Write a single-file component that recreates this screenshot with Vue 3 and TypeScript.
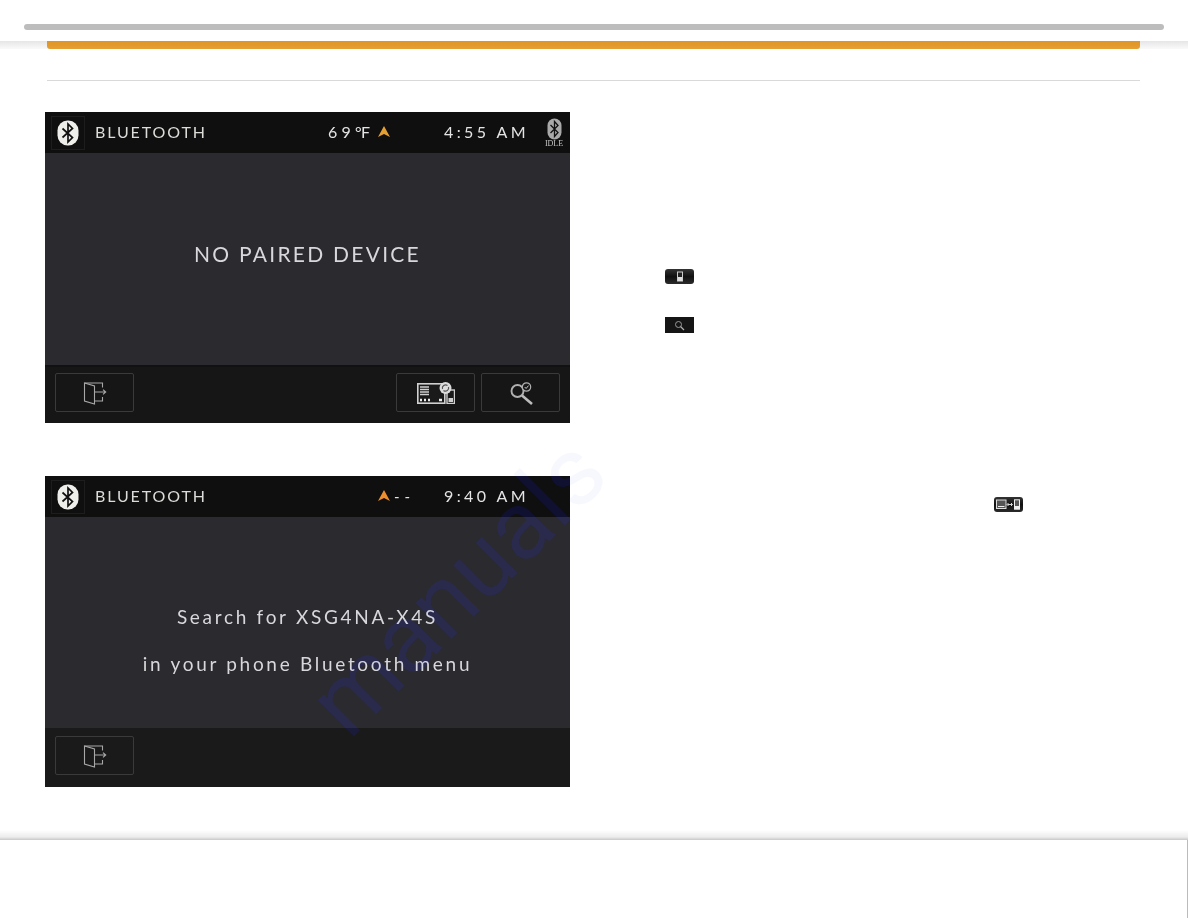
<template>
  <div class="page">
    <div class="topbar"><div class="greybar"></div></div>
    <div class="band"><div class="orange"></div></div>
    <div class="rule"></div>

    <div class="content">
      <div class="screens">
        <div v-for="s in screens" :key="s.title + s.time" class="screen" :class="s.variant">
          <div class="head">
            <div class="logo">
              <svg width="22" height="26" viewBox="0 0 22 26">
                <rect x="0.5" y="0.5" width="21" height="25" rx="10" fill="#eeeeea" />
                <path d="M5.5 8.5 L15.5 17.5 L11 22 L11 4 L15.5 8.5 L5.5 17.5" fill="none" stroke="#111" stroke-width="1.7" />
              </svg>
            </div>
            <div class="title">BLUETOOTH</div>
            <div class="weather">
              <template v-if="s.temp">
                <span class="temp">{{ s.temp }}</span>
                <span class="deg">°F</span>
                <svg class="arrow" width="12" height="11" viewBox="0 0 12 11"><path d="M6 0 L12 11 L6 8 L0 11 Z" fill="#e5a033" /></svg>
              </template>
              <template v-else>
                <svg class="arrow" width="12" height="11" viewBox="0 0 12 11"><path d="M6 0 L12 11 L6 8 L0 11 Z" fill="#ee8e2c" /></svg>
                <span class="dash">- -</span>
              </template>
            </div>
            <div class="time">{{ s.time }}</div>
            <div class="idle">
              <template v-if="s.idle">
                <svg width="15" height="22" viewBox="0 0 15 22">
                  <rect x="0.5" y="0.5" width="14" height="21" rx="7" fill="#a9a9a9" />
                  <path d="M3.5 7 L11 14.5 L7.5 18.5 L7.5 3.5 L11 7.5 L3.5 15" fill="none" stroke="#111" stroke-width="1.3" />
                </svg>
                <span>IDLE</span>
              </template>
            </div>
          </div>

          <div class="body">
            <div v-for="line in s.lines" :key="line" class="msg">{{ line }}</div>
          </div>

          <div class="foot">
            <button class="btn">
              <svg width="24" height="24" viewBox="0 0 24 24" fill="none" stroke="#a8a8a8" stroke-width="1.1">
                <path d="M1.5 2 L19.5 2 L19.5 6.5 M19.5 16 L19.5 20 L11.5 20" />
                <path d="M1.5 2 L11.5 5 L11.5 23 L1.5 20 Z" />
                <path d="M11.5 11 L22.5 11 M20 8.7 L22.7 11 L20 13.3" />
              </svg>
            </button>
            <template v-if="s.variant === 'paired'">
              <button class="btn push">
                <svg width="38" height="22" viewBox="0 0 38 22">
                  <rect x="0.8" y="1.8" width="27" height="19.4" fill="#1a1a1a" stroke="#d0d0d0" stroke-width="1.6" />
                  <path d="M3 5 H12 M3 7.5 H12 M3 10 H12 M3 12.5 H12" stroke="#d0d0d0" stroke-width="1.4" />
                  <path d="M3 18 H5 M7 18 H9 M11 18 H13 M22 18 H25" stroke="#eee" stroke-width="2.4" />
                  <rect x="30" y="8" width="7.5" height="13.5" fill="#1a1a1a" stroke="#d0d0d0" stroke-width="1.4" />
                  <path d="M31.5 16 H36 V20 H31.5 Z" fill="#d0d0d0" />
                  <circle cx="28.5" cy="6" r="6" fill="#dcdcdc" />
                  <path d="M25.5 7 A3.2 3.2 0 0 1 30.5 3.5 M31.5 5 A3.2 3.2 0 0 1 26.5 8.5" fill="none" stroke="#555" stroke-width="1.2" />
                </svg>
              </button>
              <button class="btn">
                <svg width="24" height="24" viewBox="0 0 24 24" fill="none">
                  <circle cx="8.5" cy="10" r="6" stroke="#b0b0b0" stroke-width="1.9" />
                  <path d="M13 14.5 L23 23" stroke="#bcbcbc" stroke-width="2.6" />
                  <circle cx="17.5" cy="6" r="4.2" fill="#1a1a1a" stroke="#b0b0b0" stroke-width="1.2" />
                  <path d="M15.7 6 L17.1 7.5 L19.5 4.6" stroke="#c8c8c8" stroke-width="1" />
                </svg>
              </button>
            </template>
          </div>
        </div>
      </div>

      <div class="side">
        <div class="chip rounded chip-phone">
          <svg width="8" height="11" viewBox="0 0 8 11" fill="none">
            <rect x="1.5" y="1" width="5" height="9" fill="#222" stroke="#ccc" />
            <path d="M2 6 H6 V10 H2 Z" fill="#ddd" />
          </svg>
        </div>
        <div class="chip chip-search">
          <svg width="11" height="11" viewBox="0 0 11 11" fill="none">
            <circle cx="4.5" cy="4.5" r="3" stroke="#9a9a9a" />
            <path d="M6.5 6.5 L10 10" stroke="#b0b0b0" stroke-width="1.2" />
          </svg>
        </div>
        <div class="chip rounded chip-link">
          <svg width="25" height="11" viewBox="0 0 25 11" fill="none">
            <rect x="0.5" y="1" width="9.5" height="8.5" fill="#555" stroke="#ddd" />
            <path d="M2 7.5 H8.5" stroke="#eee" />
            <path d="M11.5 5.5 H16 M12.5 4 L11 5.5 L12.5 7 M15 4 L16.5 5.5 L15 7" stroke="#eee" stroke-width="0.9" />
            <rect x="18.5" y="0.8" width="5" height="9.4" fill="#555" stroke="#eee" />
            <path d="M19 7 H23 V10 H19 Z" fill="#eee" />
          </svg>
        </div>
      </div>
    </div>

    <div class="bottom">
      <div class="shade"></div>
      <div class="sheet"></div>
    </div>

    <!-- two layers: faint tint over the white page, stronger glow over the dark screens -->
    <div class="watermark tint">manuals</div>
    <div class="watermark glow" aria-hidden="true">manuals</div>
  </div>
</template>

<script setup lang="ts">
interface Screen {
  title: string;
  variant: 'paired' | 'search';
  temp: string;
  time: string;
  idle: boolean;
  lines: string[];
}

const screens: Screen[] = [
  { title: 'BLUETOOTH', variant: 'paired', temp: '69', time: '4:55 AM', idle: true, lines: ['NO PAIRED DEVICE'] },
  {
    title: 'BLUETOOTH',
    variant: 'search',
    temp: '',
    time: '9:40 AM',
    idle: false,
    lines: ['Search for XSG4NA-X4S', 'in your phone Bluetooth menu'],
  },
];
</script>

<style>
html,
body {
  margin: 0;
  background: #fff;
}
</style>

<style scoped>
.page {
  position: relative;
  width: 1188px;
  height: 918px;
  display: flex;
  flex-direction: column;
  overflow: hidden;
  background: #fff;
  font-family: Lato, "Open Sans", sans-serif;
}

/* top of page */
.topbar {
  height: 41px;
  padding: 24px 24px 0;
  box-sizing: border-box;
}
.greybar {
  height: 6px;
  border-radius: 3px;
  background: #bdbdbd;
}
.band {
  height: 8px;
  background: linear-gradient(#e6e6e6, #fafafa);
  padding: 0 48px 0 47px;
}
.orange {
  height: 8px;
  background: linear-gradient(#e09426, #e59f33);
  border-radius: 0 0 3px 3px;
}
.rule {
  height: 1px;
  margin: 31px 48px 0 47px;
  background: #d9d9d9;
}

.content {
  display: flex;
  padding: 31px 0 0 45px;
}
.screens {
  width: 525px;
  display: flex;
  flex-direction: column;
  gap: 53px;
}

/* head unit screens */
.screen {
  height: 311px;
  display: flex;
  flex-direction: column;
  color: #e4e4e4;
}
.head {
  height: 41px;
  display: grid;
  grid-template-columns: 50px 233px 116px 91px 35px;
  align-items: center;
  background: #0f0f0f;
}
.logo {
  width: 34px;
  height: 34px;
  margin-left: 6px;
  box-sizing: border-box;
  border: 1px solid #1d1d1d;
  display: flex;
  align-items: center;
  justify-content: center;
}
.title {
  padding-bottom: 2px;
  font-size: 16px;
  letter-spacing: 1.9px;
  color: #dcdcd8;
}
.weather {
  display: flex;
  align-items: center;
  padding-bottom: 2px;
  font-size: 16px;
}
.temp {
  letter-spacing: 4.2px;
}
.deg {
  margin-left: 0;
  letter-spacing: -0.5px;
}
.weather .arrow {
  margin-left: 8px;
}
.search .weather {
  padding-left: 42px;
}
.dash {
  margin-left: 4px;
  font-size: 15px;
  letter-spacing: 0.6px;
  white-space: pre;
}
.time {
  padding-bottom: 2px;
  font-size: 16px;
  letter-spacing: 3.4px;
  white-space: nowrap;
}
.idle {
  display: flex;
  flex-direction: column;
  align-items: center;
  font-family: "Liberation Serif", serif;
  font-size: 8px;
  line-height: 8px;
  color: #c8c8c8;
  padding-left: 3px;
}
.body {
  flex: 1;
  display: flex;
  flex-direction: column;
  align-items: center;
  justify-content: center;
  background: #2a2a2f;
}
.paired .body {
  padding-bottom: 12px;
  box-sizing: border-box;
}
.search .body {
  padding-top: 35px;
  box-sizing: border-box;
}
.msg {
  line-height: 47px;
  font-size: 19px;
  letter-spacing: 2.7px;
  color: #d8d8dc;
}
.paired .msg {
  font-size: 21px;
  letter-spacing: 2.25px;
}
.foot {
  height: 58px;
  box-sizing: border-box;
  display: flex;
  gap: 6px;
  padding: 8px 10px 11px;
  background: #161616;
}
.paired .foot {
  border-top: 2px solid #111;
  padding-top: 6px;
}
.search .foot {
  height: 59px;
  background: #1a1a1a;
}
.btn {
  width: 79px;
  height: 39px;
  padding: 0;
  display: flex;
  align-items: center;
  justify-content: center;
  background: transparent;
  border: 1px solid #3a3a3a;
  border-radius: 2px;
}
.push {
  margin-left: auto;
}

/* small inline button pictures */
.side {
  flex: 1;
  display: flex;
  flex-direction: column;
}
.chip {
  width: 29px;
  height: 15px;
  display: flex;
  align-items: center;
  justify-content: center;
  background: #151515;
}
.rounded {
  border-radius: 3px;
  background: linear-gradient(#333, #111 50%, #2a2a2a);
}
.chip-phone {
  margin: 157px 0 0 95px;
}
.chip-search {
  margin: 33px 0 0 95px;
  height: 16px;
}
.chip-link {
  margin: 164px 0 0 424px;
}

/* bottom of page */
.bottom {
  margin-top: auto;
}
.shade {
  height: 10px;
  background: linear-gradient(#fff, #ececec 70%, #c8c8c8);
}
.sheet {
  height: 78px;
  box-sizing: border-box;
  border-right: 1px solid #bbb;
}

.watermark {
  position: absolute;
  left: 326px;
  top: 668px;
  font-family: Roboto, sans-serif;
  font-size: 97px;
  line-height: 100px;
  transform: rotate(-45deg);
  transform-origin: 0 50%;
  pointer-events: none;
}
.tint {
  color: rgba(60, 60, 240, 0.04);
}
.glow {
  color: #00001c;
  mix-blend-mode: screen;
}
</style>
